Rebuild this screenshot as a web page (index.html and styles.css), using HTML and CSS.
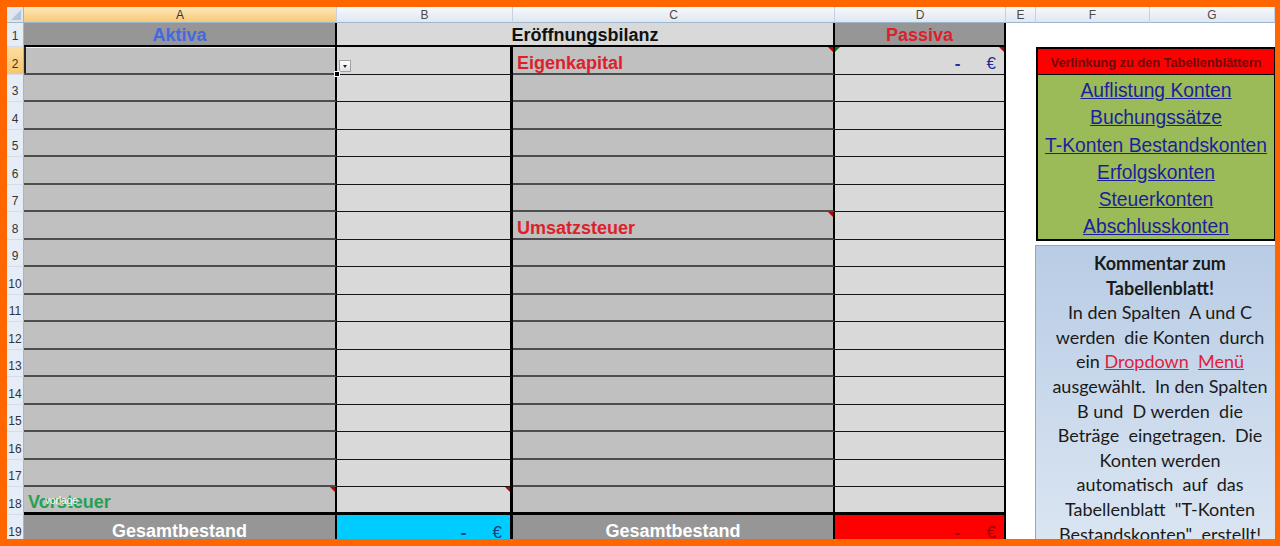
FILE: index.html
```html
<!DOCTYPE html>
<html lang="de">
<head>
<meta charset="utf-8">
<title>Eröffnungsbilanz</title>
<link rel="stylesheet" href="styles.css">
</head>
<body>
<div class="frame">
  <div class="sheet">
    <div class="colheads">
      <div class="corner"></div>
      <div class="ch w-a sel">A</div>
      <div class="ch w-b">B</div>
      <div class="ch w-c">C</div>
      <div class="ch w-d">D</div>
      <div class="ch w-e">E</div>
      <div class="ch w-f">F</div>
      <div class="ch w-g">G</div>
    </div>
    <div class="body">
      <div class="grid">
        <div class="rn">1</div>
        <div class="c ca dark r1 center t-blue">Aktiva</div>
        <div class="c cb merged r1 center t-black">Eröffnungsbilanz</div>
        <div class="c cd dark r1 center t-red">Passiva</div>

        <div class="rn sel">2</div>
        <div class="c ca selected"><span class="handle"></span></div>
        <div class="c cb"><span class="dd"></span></div>
        <div class="c cc note t-red">Eigenkapital</div>
        <div class="c cd note err amt t-navy"><span class="dash">-</span><span>€</span></div>

        <div class="rn">3</div><div class="c ca"></div><div class="c cb"></div><div class="c cc"></div><div class="c cd"></div>
        <div class="rn">4</div><div class="c ca"></div><div class="c cb"></div><div class="c cc"></div><div class="c cd"></div>
        <div class="rn">5</div><div class="c ca"></div><div class="c cb"></div><div class="c cc"></div><div class="c cd"></div>
        <div class="rn">6</div><div class="c ca"></div><div class="c cb"></div><div class="c cc"></div><div class="c cd"></div>
        <div class="rn">7</div><div class="c ca"></div><div class="c cb"></div><div class="c cc"></div><div class="c cd"></div>
        <div class="rn">8</div><div class="c ca"></div><div class="c cb"></div><div class="c cc note t-red">Umsatzsteuer</div><div class="c cd"></div>
        <div class="rn">9</div><div class="c ca"></div><div class="c cb"></div><div class="c cc"></div><div class="c cd"></div>
        <div class="rn">10</div><div class="c ca"></div><div class="c cb"></div><div class="c cc"></div><div class="c cd"></div>
        <div class="rn">11</div><div class="c ca"></div><div class="c cb"></div><div class="c cc"></div><div class="c cd"></div>
        <div class="rn">12</div><div class="c ca"></div><div class="c cb"></div><div class="c cc"></div><div class="c cd"></div>
        <div class="rn">13</div><div class="c ca"></div><div class="c cb"></div><div class="c cc"></div><div class="c cd"></div>
        <div class="rn">14</div><div class="c ca"></div><div class="c cb"></div><div class="c cc"></div><div class="c cd"></div>
        <div class="rn">15</div><div class="c ca"></div><div class="c cb"></div><div class="c cc"></div><div class="c cd"></div>
        <div class="rn">16</div><div class="c ca"></div><div class="c cb"></div><div class="c cc"></div><div class="c cd"></div>
        <div class="rn">17</div><div class="c ca"></div><div class="c cb"></div><div class="c cc"></div><div class="c cd"></div>

        <div class="rn">18</div>
        <div class="c ca r18 note t-green">Vorsteuer<span class="wm">vorlage</span></div>
        <div class="c cb r18 note"></div>
        <div class="c cc r18"></div>
        <div class="c cd r18"></div>

        <div class="rn">19</div>
        <div class="c ca dark r19 center t-white">Gesamtbestand</div>
        <div class="c cb cyan r19 amt t-slate"><span class="dash">-</span><span>€</span></div>
        <div class="c cc dark r19 center t-white">Gesamtbestand</div>
        <div class="c cd redbg r19 amt t-dred"><span class="dash">-</span><span>€</span></div>
      </div>

      <div class="panel">
        <div class="links">
          <div class="links-head">Verlinkung zu den Tabellenblättern</div>
          <div class="links-body">
            <a href="#">Auflistung Konten</a>
            <a href="#">Buchungssätze</a>
            <a href="#">T-Konten Bestandskonten</a>
            <a href="#">Erfolgskonten</a>
            <a href="#">Steuerkonten</a>
            <a href="#">Abschlusskonten</a>
          </div>
        </div>
        <div class="comment">
          <b>Kommentar zum<br>Tabellenblatt!</b><br>
          In den Spalten&nbsp; A und C<br>
          werden&nbsp; die Konten&nbsp; durch<br>
          ein <span class="rlink">Dropdown</span>&nbsp; <span class="rlink">Menü</span><br>
          ausgewählt.&nbsp; In den Spalten<br>
          B und&nbsp; D werden&nbsp; die<br>
          Beträge&nbsp; eingetragen.&nbsp; Die<br>
          Konten werden<br>
          automatisch&nbsp; auf&nbsp; das<br>
          Tabellenblatt&nbsp; "T-Konten<br>
          Bestandskonten"&nbsp; erstellt!
        </div>
      </div>
    </div>
  </div>
</div>
</body>
</html>
```

FILE: styles.css
```css
html, body {
  margin: 0;
  padding: 0;
}
body {
  background: #ff6600;
}
.frame {
  padding: 7px 5px 0 7px;
  height: 546px;
  box-sizing: border-box;
}
.sheet {
  width: 1268px;
  height: 532px;
  overflow: hidden;
  background: #ffffff;
  font-family: "Liberation Sans", Arial, sans-serif;
}

/* column headers */
.colheads {
  display: flex;
  height: 16px;
}
.corner {
  width: 17px;
  box-sizing: border-box;
  background: #dfe6ef;
  border-right: 1px solid #9eb6ce;
  border-bottom: 1px solid #9eb6ce;
  position: relative;
}
.corner::after {
  content: "";
  position: absolute;
  right: 2px;
  bottom: 2px;
  width: 0;
  height: 0;
  border-left: 10px solid transparent;
  border-bottom: 10px solid #b4c5da;
}
.ch {
  box-sizing: border-box;
  background: linear-gradient(#f7f9fc, #dfe7f1);
  border-right: 1px solid #c5d2e3;
  border-bottom: 1px solid #9eb6ce;
  color: #4a4a4a;
  font-size: 12px;
  display: flex;
  align-items: center;
  justify-content: center;
}
.ch.sel {
  background: linear-gradient(#fde9b8, #f8c878);
  color: #333;
}
.w-a { width: 313px; }
.w-b { width: 176px; }
.w-c { width: 322px; }
.w-d { width: 171px; }
.w-e { width: 30px; }
.w-f { width: 114px; }
.w-g { width: 125px; }

/* body */
.body {
  display: flex;
}
.grid {
  display: grid;
  grid-template-columns: 17px 313px 176px 322px 171px;
  grid-template-rows: 24px 28px 27px 28px 27px 28px 27px 28px 27px 28px 27px 28px 27px 28px 27px 28px 27px 28px 28px;
}
.rn {
  box-sizing: border-box;
  background: #e6edf7;
  border-right: 1px solid #9eb6ce;
  border-bottom: 1px solid #d3dce8;
  color: #333;
  font-size: 12px;
  display: flex;
  align-items: flex-end;
  justify-content: center;
  padding-bottom: 3px;
}
.rn.sel {
  background: linear-gradient(#fbdf9f, #f6c66e);
}

.c {
  box-sizing: border-box;
  position: relative;
  display: flex;
  align-items: flex-end;
  padding: 0 4px 0;
  font-size: 18px;
  font-weight: bold;
  line-height: 19px;
  white-space: nowrap;
  border-right: 2px solid #000;
}
.ca, .cc {
  background: #c0c0c0;
  border-bottom: 2px solid #4d4d4d;
}
.cb, .cd {
  background: #d9d9d9;
  border-bottom: 1px solid #151515;
}
.cb {
  border-right-width: 3px;
}
.merged {
  grid-column: span 2;
  border-right-width: 2px;
}
.dark { background: #969696; }
.cyan { background: #00ccff; }
.redbg { background: #ff0000; }
.r1 { border-bottom: 2px solid #000; }
.r18 { border-bottom: 3px solid #000; }
.r19 { border-bottom: none; padding-bottom: 2px; }
.center { justify-content: center; }

.t-blue { color: #4468e0; }
.t-black { color: #111; }
.t-red { color: #dd1f2b; }
.t-green { color: #26a055; }
.t-white { color: #ffffff; }
.t-navy { color: #1f2da0; }
.t-slate { color: #1e3f78; }
.t-dred { color: #9a0000; }

.amt {
  justify-content: flex-end;
  font-weight: normal;
  font-size: 17px;
  padding-right: 8px;
  padding-bottom: 1px;
}
.amt .dash {
  margin-right: 26px;
  font-weight: bold;
}

/* selected cell A2 */
.selected {
  box-shadow: inset 2px 0 0 #222, inset 0 1px 0 #efefef;
}
.handle {
  position: absolute;
  right: -5px;
  bottom: -4px;
  width: 4px;
  height: 4px;
  background: #000;
  border: 1px solid #fff;
  z-index: 2;
}
.dd {
  position: absolute;
  left: 2px;
  bottom: 2px;
  width: 12px;
  height: 12px;
  box-sizing: border-box;
  border: 1px solid #a0a0a0;
  background: linear-gradient(#ffffff, #dfe3ea);
}
.dd::after {
  content: "";
  position: absolute;
  left: 3px;
  top: 4px;
  border-left: 2.5px solid transparent;
  border-right: 2.5px solid transparent;
  border-top: 3px solid #222;
}

/* comment/error indicators */
.note::after {
  content: "";
  position: absolute;
  top: 0;
  right: 0;
  width: 0;
  height: 0;
  border-left: 5px solid transparent;
  border-top: 5px solid #c00000;
}
.err::before {
  content: "";
  position: absolute;
  top: 0;
  left: 0;
  width: 0;
  height: 0;
  border-right: 5px solid transparent;
  border-top: 5px solid #107a10;
}
.wm {
  position: absolute;
  left: 21px;
  top: 8px;
  font-size: 10px;
  font-weight: normal;
  color: #ffffff;
  line-height: 12px;
}

/* right panel */
.panel {
  width: 269px;
  box-sizing: border-box;
  padding-left: 30px;
  background: #ffffff;
}
.links {
  margin-top: 24px;
  width: 240px;
  box-sizing: border-box;
  border: 2px solid #000;
}
.links-head {
  height: 26px;
  box-sizing: border-box;
  background: #ff0000;
  border-bottom: 1px solid #000;
  color: #6e0a0a;
  font-size: 13px;
  font-weight: bold;
  display: flex;
  align-items: flex-end;
  justify-content: center;
  padding-bottom: 4px;
  white-space: nowrap;
  letter-spacing: -0.1px;
}
.links-body {
  background: #9bbb59;
  padding-top: 2px;
  height: 164px;
  box-sizing: border-box;
}
.links-body a {
  display: block;
  height: 27.3px;
  line-height: 27px;
  text-align: center;
  font-size: 19.3px;
  color: #1b1f9c;
  text-decoration: underline;
  white-space: nowrap;
}
.comment {
  margin-top: 4px;
  margin-left: -1px;
  width: 250px;
  height: 320px;
  box-sizing: border-box;
  border: 1px solid #8ea8c8;
  background: linear-gradient(#b8cce5, #dde7f3);
  padding-top: 5px;
  text-align: center;
  font-family: Lato, "Open Sans", sans-serif;
  font-size: 18px;
  line-height: 24.6px;
  color: #1a1a1a;
  white-space: nowrap;
}
.comment b {
  font-weight: bold;
}
.rlink {
  color: #e21c3a;
  text-decoration: underline;
}
```
